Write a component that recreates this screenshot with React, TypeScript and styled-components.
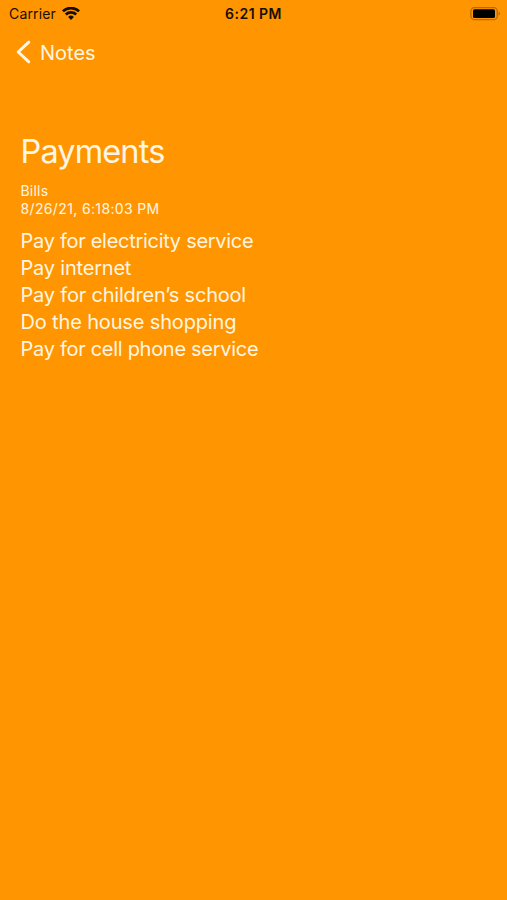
import React from "react";
import styled, { createGlobalStyle } from "styled-components";

const Global = createGlobalStyle`
  * { box-sizing: border-box; }
  body { margin: 0; background: #ff9500; font-family: Inter, "Liberation Sans", sans-serif; }
`;

const Screen = styled.main`
  display: flex;
  flex-direction: column;
  height: 900px;
  background: #ff9500;
  color: #fff5e3;
`;

const StatusBar = styled.header`
  display: grid;
  grid-template-columns: 1fr auto 1fr;
  align-items: center;
  height: 27px;
  padding: 0 6px 0 9px;
  color: #180e00;
`;

const Carrier = styled.div`
  display: flex;
  align-items: center;
  gap: 6px;
  font-size: 14px;
  letter-spacing: 0.15px;
`;

const Clock = styled.time`
  margin-left: -3px;
  font-size: 14px;
  font-weight: 600;
  letter-spacing: 0.46px;
`;

const BatterySlot = styled.div`
  display: flex;
  justify-content: flex-end;
`;

const NavBar = styled.nav`
  display: flex;
  height: 50px;
  padding-left: 16px;
`;

const BackButton = styled.button`
  display: flex;
  align-items: center;
  gap: 9px;
  padding: 0;
  border: 0;
  background: none;
  color: inherit;
  font: 400 20px/24px Inter, sans-serif;
`;

const BackLabel = styled.span`
  padding-top: 2px;
`;

const Note = styled.article`
  padding: 53px 20.5px 0;
`;

const Title = styled.h1`
  margin: 0;
  font-size: 32.5px;
  line-height: 44px;
  font-weight: 400;
  letter-spacing: -0.87px;
`;

const Meta = styled.div`
  margin-top: 8px;
  font-size: 14px;
  line-height: 18px;
`;

const MetaLine = styled.div<{ $spacing: number }>`
  letter-spacing: ${(p) => p.$spacing}px;
`;

const Body = styled.section`
  margin-top: 10px;
`;

const Line = styled.p<{ $spacing: number }>`
  margin: 0;
  font-size: 20px;
  line-height: 27px;
  letter-spacing: ${(p) => p.$spacing}px;
`;

const lines = [
  { text: "Pay for electricity service", spacing: -0.29 },
  { text: "Pay internet", spacing: -0.2 },
  { text: "Pay for children’s school", spacing: -0.2 },
  { text: "Do the house shopping", spacing: -0.15 },
  { text: "Pay for cell phone service", spacing: -0.29 },
];

export default function App() {
  return (
    <Screen>
      <Global />
      <StatusBar>
        <Carrier>
          <span>Carrier</span>
          <svg width="18" height="14" viewBox="0 0 18 14" fill="none" stroke="currentColor" strokeWidth="2.7">
            <path d="M.9 4.3a11.7 11.7 0 0 1 16.2 0M3.8 7.5a7.5 7.5 0 0 1 10.4 0" />
            <path d="M6.1 10a4.1 4.1 0 0 1 5.8 0L9 13z" fill="currentColor" stroke="none" />
          </svg>
        </Carrier>
        <Clock>6:21 PM</Clock>
        <BatterySlot>
          <svg width="31" height="14" viewBox="0 0 31 14">
            <rect x="0.9" y="0.5" width="26.4" height="12.2" rx="3.8" fill="none" stroke="#b46c0b" strokeWidth="1.3" />
            <rect x="3" y="2.2" width="22" height="8.8" rx="1.6" fill="#000" />
            <path d="M28.6 4.5c2 .8 2 3.4 0 4.2z" fill="#b46c0b" />
          </svg>
        </BatterySlot>
      </StatusBar>
      <NavBar>
        <BackButton>
          <svg width="15" height="24" viewBox="0 0 15 24" fill="none" stroke="currentColor" strokeWidth="3" strokeLinecap="round" strokeLinejoin="round">
            <path d="M12.8 2.2 2.2 12l10.6 9.8" />
          </svg>
          <BackLabel>Notes</BackLabel>
        </BackButton>
      </NavBar>
      <Note>
        <Title>Payments</Title>
        <Meta>
          <MetaLine $spacing={0.2}>Bills</MetaLine>
          <MetaLine $spacing={0.36}>8/26/21, 6:18:03 PM</MetaLine>
        </Meta>
        <Body>
          {lines.map(({ text, spacing }) => (
            <Line key={text} $spacing={spacing}>
              {text}
            </Line>
          ))}
        </Body>
      </Note>
    </Screen>
  );
}
